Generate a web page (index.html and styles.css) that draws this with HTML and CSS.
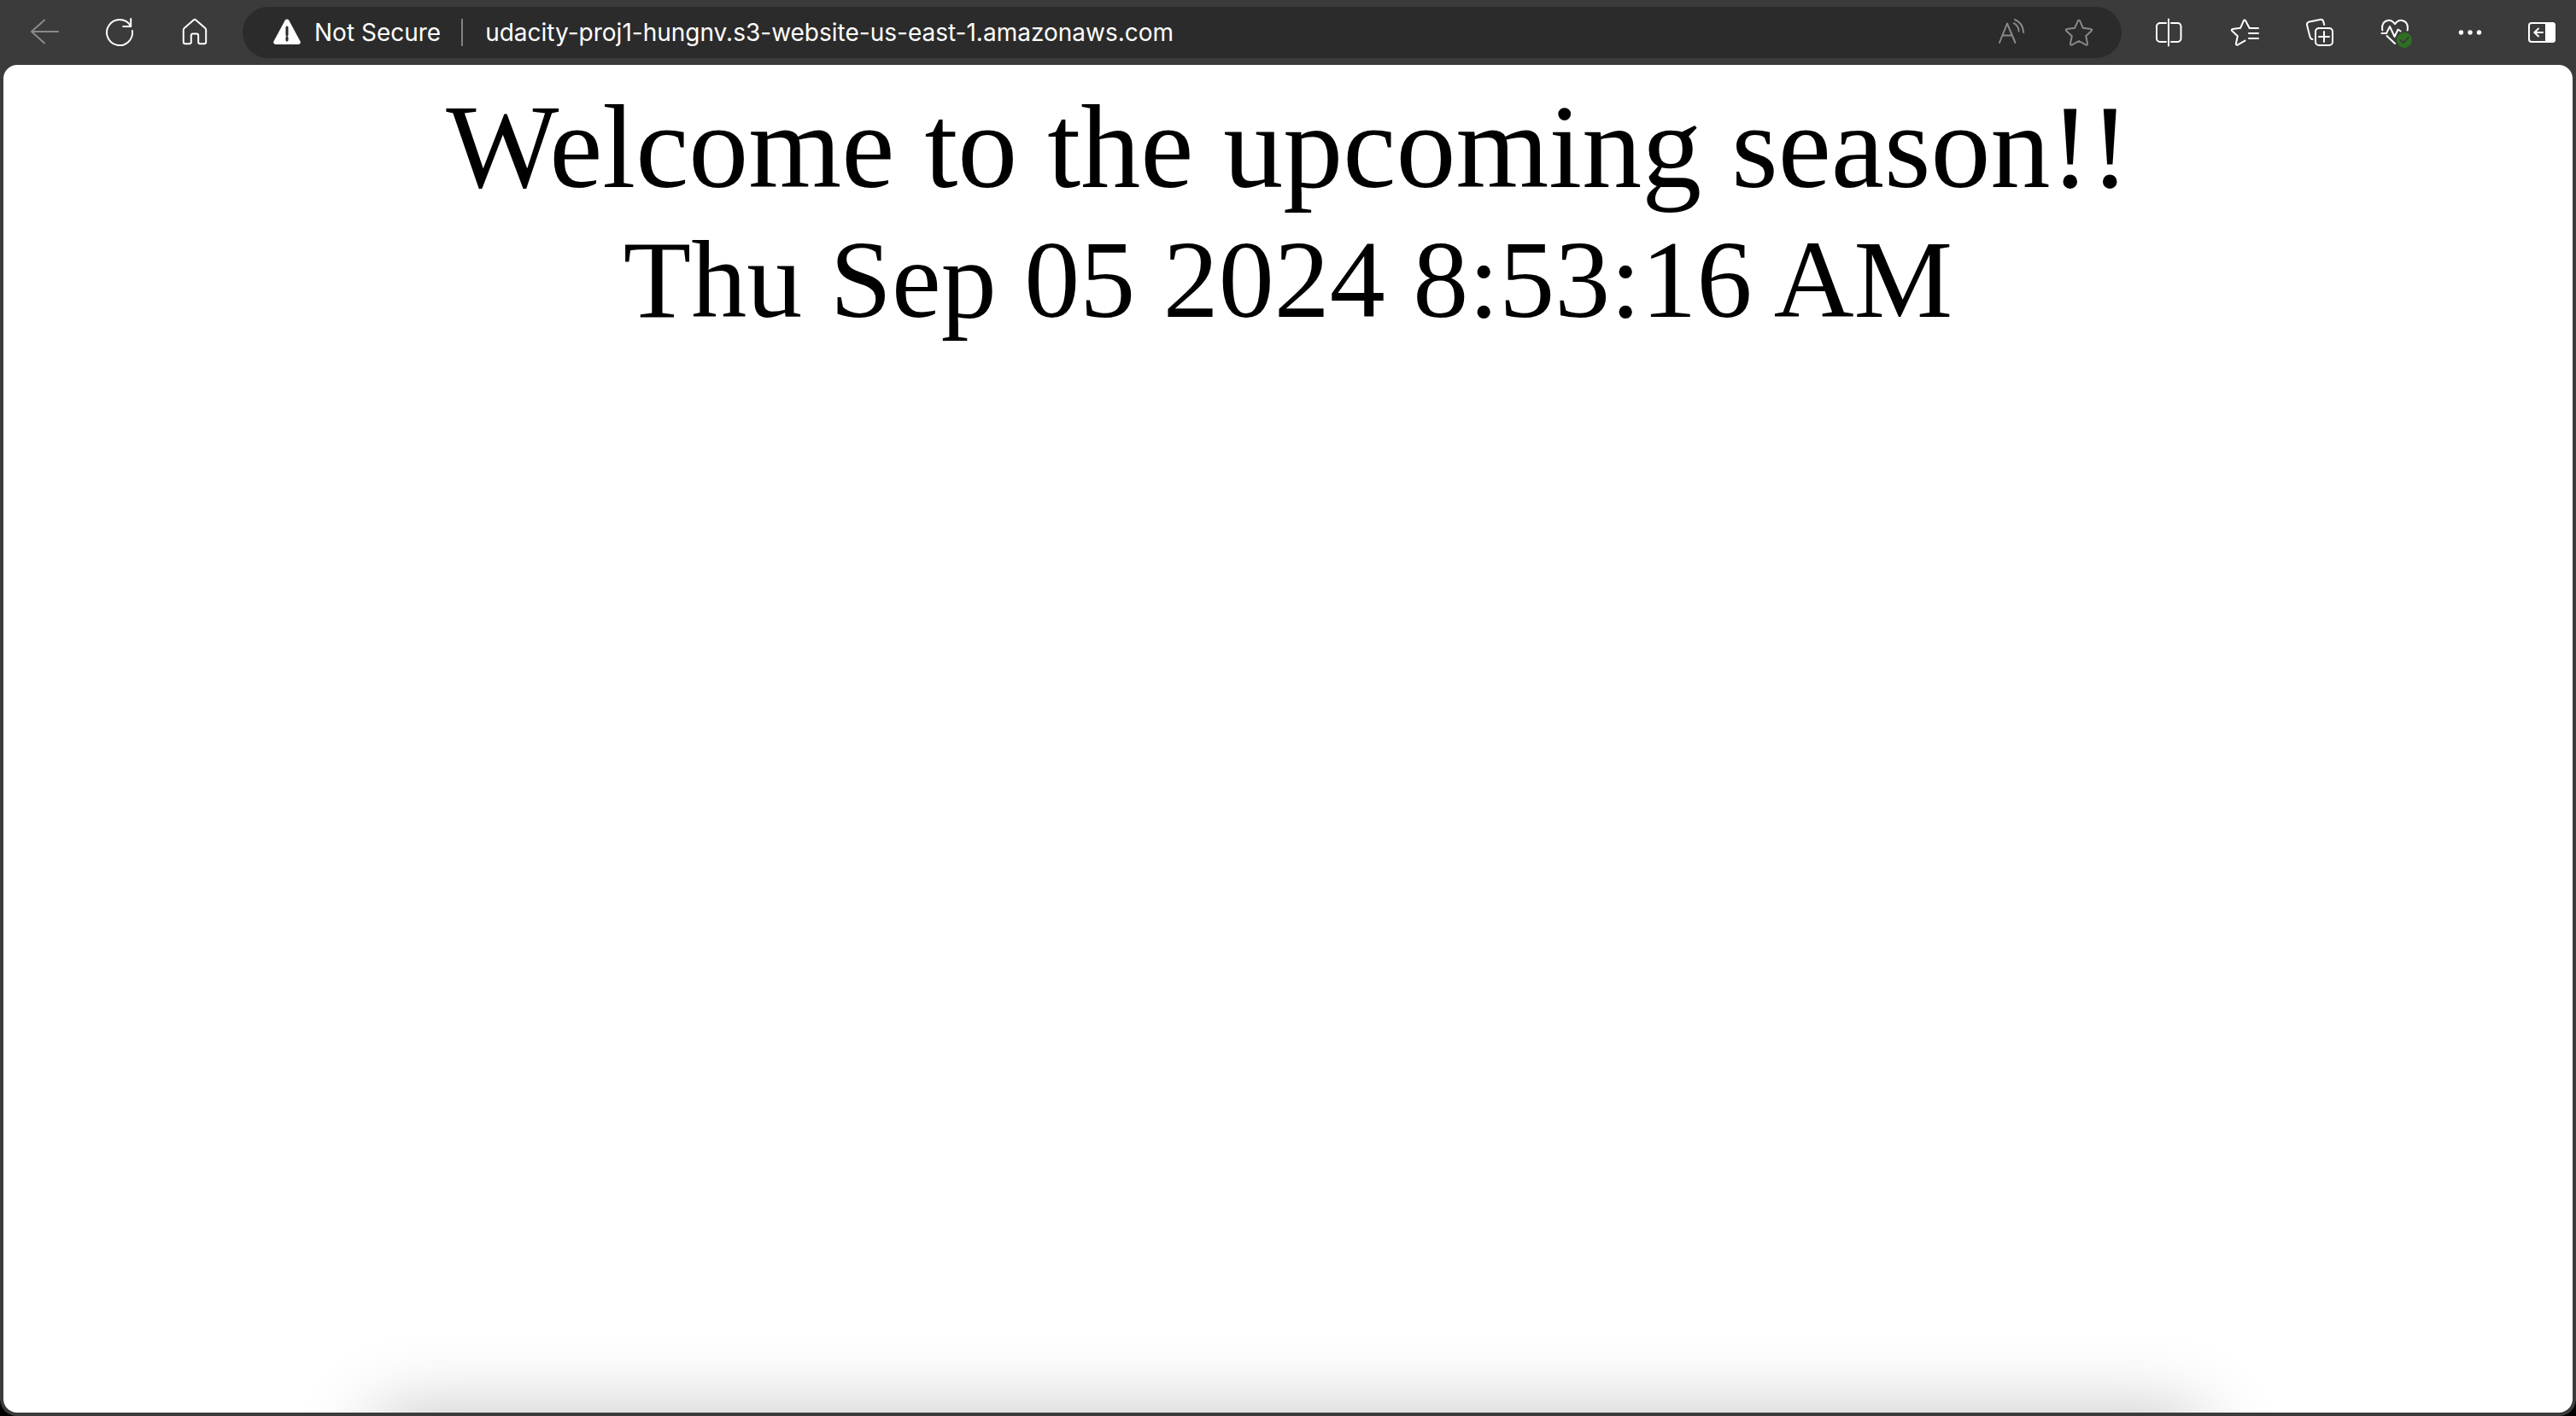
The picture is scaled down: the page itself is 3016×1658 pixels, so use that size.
FILE: index.html
```html
<!DOCTYPE html>
<html lang="en">
<head>
<meta charset="utf-8">
<title>udacity-proj1-hungnv</title>
<link rel="stylesheet" href="styles.css">
</head>
<body>
<div class="window">
  <header class="toolbar">
    <nav class="actions" aria-label="Navigation">
      <button class="tool dim" aria-label="Back" disabled><svg viewBox="0 0 40 40"><path d="M20 5.500 5 19l15 13.500M5 19h31"/></svg></button>
      <button class="tool" aria-label="Refresh"><svg viewBox="0 0 40 40"><path d="M34.900 18A15 15 0 1 1 32.500 11.700M33.200 4v9h-9"/></svg></button>
      <button class="tool" aria-label="Home"><svg viewBox="0 0 40 40"><path d="M18.600 5.500a2.100 2.100 0 0 1 2.800 0L32.300 15a2.400 2.400 0 0 1 .9 1.900V31a2.200 2.200 0 0 1-2.200 2.200h-4.600a2.200 2.200 0 0 1-2.200-2.200v-7.400a2 2 0 0 0-2-2h-4.400a2 2 0 0 0-2 2V31a2.200 2.200 0 0 1-2.200 2.200H9A2.200 2.200 0 0 1 6.800 31V16.900a2.400 2.400 0 0 1 .9-1.900z"/></svg></button>
    </nav>
    <div class="address">
      <button class="security">
        <svg viewBox="0 0 40 40"><path class="solid" d="M17.700 5.800a2.700 2.700 0 0 1 4.600 0L35.600 30.500a2.400 2.400 0 0 1-2.100 3.500h-27a2.400 2.400 0 0 1-2.100-3.500z"/><path class="mark" d="M20 14v9M20 26v3"/></svg>
        <span>Not Secure</span>
      </button>
      <input class="url" type="text" aria-label="Address" value="udacity-proj1-hungnv.s3-website-us-east-1.amazonaws.com">
      <button class="tool small dim" aria-label="Read aloud"><svg viewBox="0 0 40 40"><path d="M7 32 16 9.500 25.500 32M10.500 23.500h11.500M23.800 9.200c3.300 1.600 5.500 5 5.800 9.200M25 5c5.900 2.300 9.700 7.800 10.200 15"/></svg></button>
      <button class="tool small dim" aria-label="Add to favorites"><svg viewBox="0 0 40 40"><path d="M18.900 6.400a1.200 1.200 0 0 1 2.200 0l3.800 8.400 9.200 1.200a1.200 1.200 0 0 1 .7 2.100l-6.600 6.200 1.900 9a1.200 1.200 0 0 1-1.800 1.300L20 30l-8.300 4.600a1.200 1.200 0 0 1-1.800-1.300l1.900-9-6.600-6.200a1.200 1.200 0 0 1 .7-2.100l9.200-1.200z"/></svg></button>
    </div>
    <div class="actions">
      <button class="tool" aria-label="Split screen"><svg viewBox="0 0 40 40"><path d="M19 4.500v31M16 9H9a4 4 0 0 0-4 4v14a4 4 0 0 0 4 4h7M22 9h7.500a4 4 0 0 1 4 4v14a4 4 0 0 1-4 4H22"/></svg></button>
      <button class="tool" aria-label="Favorites"><svg viewBox="0 0 40 40"><path d="M36 15H25.700L21.100 6.200a1.200 1.200 0 0 0-2.200 0l-3.800 8.600-9.200 1.200a1.200 1.200 0 0 0-.7 2.100l6.600 6.200-1.900 9a1.200 1.200 0 0 0 1.800 1.300l8.800-5M25 21h11M25 27h11"/></svg></button>
      <button class="tool" aria-label="Collections"><svg viewBox="0 0 40 40"><rect x="15" y="15" width="20" height="20" rx="4"/><path d="M25 19v12M19 25h12M11.500 28c-2-.3-2.700-1.500-3-3L5.200 12c-.6-2.300.4-4 2.600-4.600L20 5c2-.5 3.700.2 4.300 2.300L25.200 11"/></svg></button>
      <button class="tool" aria-label="Browser essentials"><svg viewBox="0 0 40 40"><path d="M5.400 17.500c-1.200-6.500 1.400-11 6.400-11.600 3.500-.4 6 1.200 8.200 4.400 2.200-3.200 4.700-4.800 8.200-4.400 5 .6 7.600 5.100 6.400 11.600M4.500 21H10l4-8 5.600 12 4-8.500 3 2M10.500 24l9.500 9"/><circle class="status" cx="31" cy="29" r="9"/><path class="check" d="m26.500 29 3.200 3.300 6-6.300"/></svg></button>
      <button class="tool" aria-label="Settings and more"><svg viewBox="0 0 40 40"><g class="solid"><circle cx="9.500" cy="20" r="2.700"/><circle cx="20" cy="20" r="2.700"/><circle cx="30.500" cy="20" r="2.700"/></g></svg></button>
      <button class="tool small" aria-label="Sidebar"><svg viewBox="0 0 40 40"><rect x="5" y="9" width="30" height="22" rx="3"/><path class="solid" d="M24 8h8a4 4 0 0 1 4 4v16a4 4 0 0 1-4 4h-8z"/><path d="M21 20H11.500M16 15.500 11.300 20l4.700 4.500"/></svg></button>
    </div>
  </header>
  <main class="page">
    <h1 class="title">Welcome to the upcoming season!!</h1>
    <p class="clock">Thu Sep 05 2024 8:53:16 AM</p>
  </main>
</div>
</body>
</html>
```
FILE: styles.css
```css
* { box-sizing: border-box; }

html { background: #000; }

body { margin: 0; }

.window {
  display: flex;
  flex-direction: column;
  min-height: 100vh;
  padding: 0 4px 4px;
  background: #3b3b3b;
  border-radius: 0 0 20px 20px;
}

.toolbar {
  display: flex;
  align-items: center;
  gap: 12px;
  height: 76px;
  margin: 0 -4px;
  padding-left: 8px;
}

.actions { display: flex; }

button {
  display: flex;
  align-items: center;
  justify-content: center;
  padding: 0;
  border: 0;
  background: none;
  color: #fff;
  font: inherit;
}

.tool { width: 88px; height: 60px; }
.small { width: 80px; }
.dim { color: #898989; }

svg {
  flex: none;
  width: 40px;
  height: 40px;
  fill: none;
  stroke: currentColor;
  stroke-width: 2;
  stroke-linecap: round;
  stroke-linejoin: round;
}

.solid { fill: currentColor; stroke: none; }
.mark { stroke: #2b2b2b; stroke-width: 3; }
.status { fill: #2f6f22; stroke: none; }
.check { stroke: #3b3b3b; }

.address {
  display: flex;
  flex: 1;
  align-items: center;
  height: 60px;
  padding: 0 10px 0 32px;
  border-radius: 30px;
  background: #2b2b2b;
  color: #fff;
  font: 400 28px/40px Inter, "Liberation Sans", sans-serif;
}

.security { gap: 12px; }

.security::after {
  content: "";
  width: 2px;
  height: 32px;
  margin-left: 12px;
  background: #828282;
}

.url {
  flex: 1;
  min-width: 0;
  height: 40px;
  padding: 0 0 0 26px;
  border: 0;
  outline: 0;
  background: none;
  color: inherit;
  font: inherit;
}

.page {
  position: relative;
  flex: 1;
  overflow: hidden;
  padding-top: 16px;
  border-radius: 16px;
  background: #fff;
  color: #000;
  font-family: "Liberation Serif", "Times New Roman", serif;
  text-align: center;
}

/* soft shade rising from the lower edge */
.page::after {
  content: "";
  position: absolute;
  top: 100%;
  left: 14.5%;
  right: 14.5%;
  height: 200px;
  box-shadow: 0 0 90px rgba(0, 0, 0, 0.24);
}

.title {
  margin: 0;
  font-size: 140px;
  font-weight: 400;
  line-height: 160px;
}

.clock {
  margin: 0;
  font-size: 130px;
  line-height: 150px;
}
```
